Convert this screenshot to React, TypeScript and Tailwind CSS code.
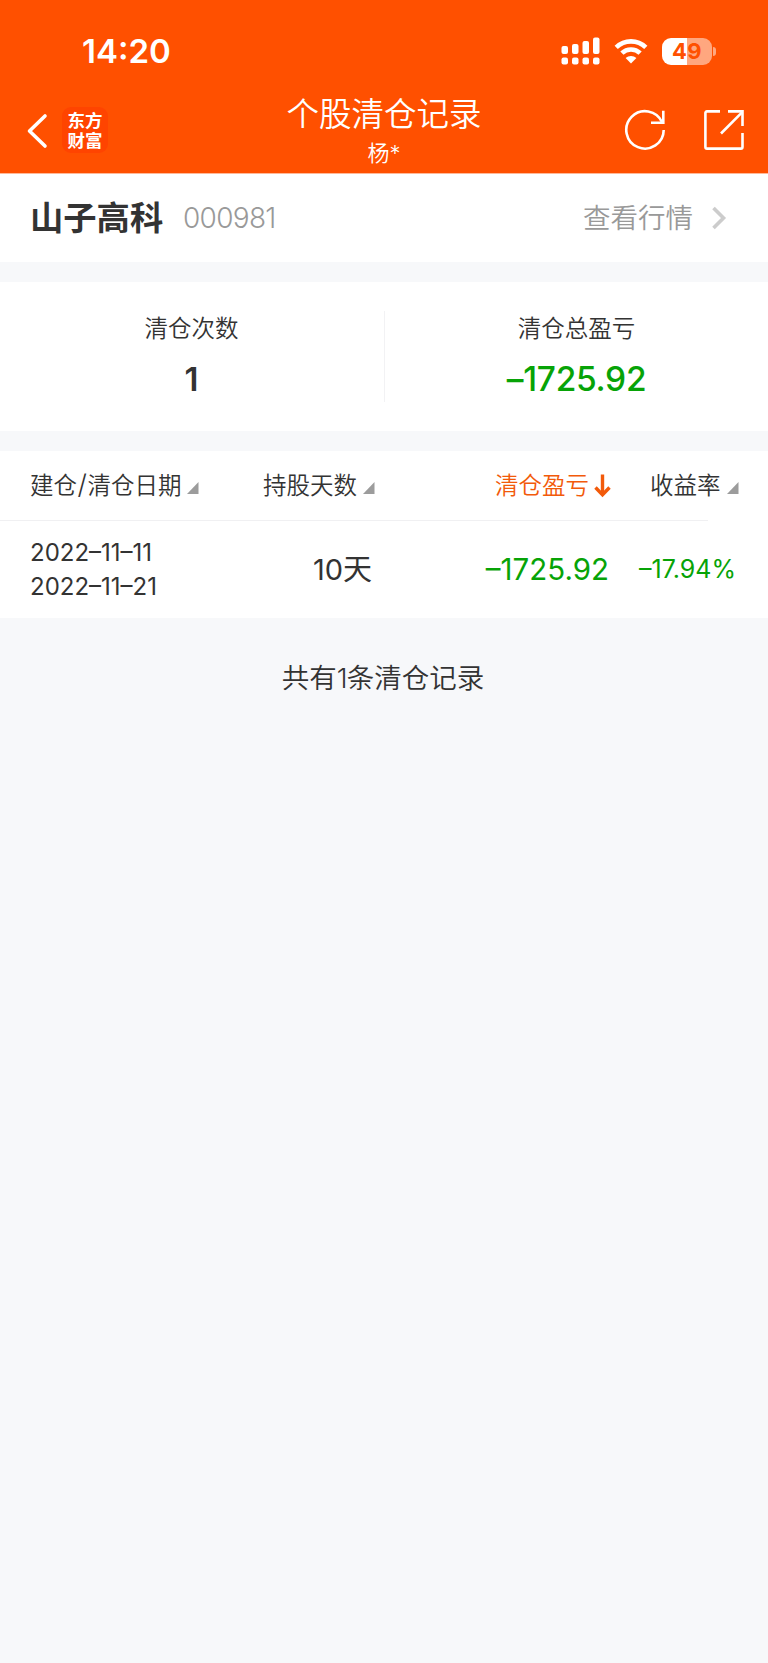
import React from "react";

interface SortHeaderProps {
  label: React.ReactNode;
  className?: string;
}

const SortHeader: React.FC<SortHeaderProps> = ({ label, className = "" }) => (
  <div className={`flex items-center shrink-0 ${className}`}>
    <span>{label}</span>
    <svg className="ml-[6px] mt-[4px] shrink-0" width="12" height="12" viewBox="0 0 12 12">
      <path d="M11.5 0V12H0Z" fill="#9c9c9c" />
    </svg>
  </div>
);

const StatusBar: React.FC = () => (
  <div className="flex h-[84px] items-start text-white">
    <span className="ml-[82px] mt-[31px] w-[92px] whitespace-nowrap text-[33px] leading-[40px] font-semibold">
      14:20
    </span>
    <svg className="ml-[387px] mt-[37px] shrink-0" width="39" height="28" viewBox="0 0 39 28" fill="currentColor">
      <rect x="0.5" y="9" width="6.5" height="8" rx="2" />
      <rect x="11" y="7" width="6.5" height="10" rx="2" />
      <rect x="21.5" y="4" width="6.5" height="13" rx="2" />
      <rect x="32" y="0.5" width="6.5" height="16.5" rx="2" />
      <rect x="0.5" y="20.5" width="6.5" height="7" rx="2" />
      <rect x="11" y="20.5" width="6.5" height="7" rx="2" />
      <rect x="21.5" y="20.5" width="6.5" height="7" rx="2" />
      <rect x="32" y="20.5" width="6.5" height="7" rx="2" />
    </svg>
    <svg className="ml-[14px] mt-[38px] shrink-0" width="34" height="26" viewBox="0 0 34 26" fill="none">
      <g stroke="currentColor" strokeWidth="4.6">
        <path d="M2.2 9.4C10.5 1.3 23.5 1.3 31.8 9.4" />
        <path d="M7.9 15.2C13 10.2 21 10.2 26.1 15.2" />
      </g>
      <path d="M17 25.4L11.6 20C14.6 17.3 19.4 17.3 22.4 20Z" fill="currentColor" />
    </svg>
    <div className="ml-[14px] mt-[38px] flex items-center">
      <div className="flex h-[27px] w-[50px] items-center justify-center rounded-[9px] bg-linear-to-r from-white from-50% to-[#ffa77f] to-50% text-[22px] leading-[27px] font-bold tracking-[0.5px]">
        <span className="text-[#ff5000]">49</span>
      </div>
      <div className="ml-[1px] h-[9px] w-[3px] rounded-r-full bg-[#ffa77f]" />
    </div>
  </div>
);

const NavBar: React.FC = () => (
  <div className="flex h-[89px] items-start text-white">
    <div className="flex w-[250px] shrink-0 items-start">
      <svg className="ml-[26px] mt-[29px]" width="22" height="36" viewBox="0 0 22 36" fill="none">
        <path d="M19 3L3.5 18L19 33" stroke="currentColor" strokeWidth="3.6" strokeLinecap="round" strokeLinejoin="round" />
      </svg>
      <div className="ml-[14px] mt-[23px] flex h-[46px] w-[46px] flex-col items-center justify-center rounded-[9px] bg-[#ff4400] pt-px text-[17.5px] leading-[19.5px] font-bold">
        <span>东方</span>
        <span>财富</span>
      </div>
    </div>
    <div className="flex w-[268px] flex-col items-center">
      <h1 className="mt-[11px] text-[32.5px] leading-[40px] font-[350]">个股清仓记录</h1>
      <span className="mt-[4px] text-[22px] leading-[28px] font-[350]">杨*</span>
    </div>
    <svg className="ml-[105px] mt-[24px] shrink-0" width="44" height="44" viewBox="0 0 44 44" fill="none" stroke="currentColor" strokeWidth="2.6">
      <path d="M40.7 22A18.7 18.7 0 1 1 39.1 14.3" />
      <path d="M40.3 2.7V14.7H28" />
    </svg>
    <svg className="ml-[35px] mt-[24px] shrink-0" width="44" height="44" viewBox="0 0 44 44" fill="none" stroke="currentColor" strokeWidth="2.6">
      <path d="M18 3.4H5Q3.4 3.4 3.4 5V39Q3.4 40.6 5 40.6H38.9Q40.5 40.6 40.5 39V25" />
      <path d="M26 3.4H40.5V18" />
      <path d="M40 4.3L19 25.5" />
    </svg>
  </div>
);

const App: React.FC = () => {
  return (
    <div className="min-h-[1663px] w-[768px] overflow-hidden bg-[#f7f8fa] font-['Inter','Noto_Sans_CJK_SC',sans-serif] text-[#333333]">
      <header className="h-[173px] bg-[#ff5000]">
        <StatusBar />
        <NavBar />
      </header>

      <section className="flex h-[89px] items-center border-t border-[#ffb999] bg-white pl-[30px]">
        <h2 className="w-[153px] whitespace-nowrap pt-px text-[33.3px] font-bold">山子高科</h2>
        <span className="w-[400px] text-[28px] font-[350] tracking-[-0.7px] text-[#999999]">000981</span>
        <span className="whitespace-nowrap pt-[2px] text-[27.5px] font-[350] text-[#999999]">查看行情</span>
        <svg className="ml-[18px]" width="18" height="26" viewBox="0 0 18 26" fill="none">
          <path d="M2.5 3L12.5 13L2.5 23" stroke="#cccccc" strokeWidth="3.6" />
        </svg>
      </section>

      <section className="mt-5 flex h-[149px] items-center bg-white">
        <div className="flex w-[383px] flex-col items-center pb-[3px]">
          <span className="text-[23.5px] leading-[36px] font-[350]">清仓次数</span>
          <span className="mt-[12px] text-[33px] leading-[40px] font-semibold">1</span>
        </div>
        <div className="ml-px h-[91px] w-px bg-[#f2f2f4]" />
        <div className="flex w-[383px] flex-col items-center pb-[3px]">
          <span className="text-[23.5px] leading-[36px] font-[350]">清仓总盈亏</span>
          <span className="mt-[12px] text-[33.5px] leading-[40px] font-[550] tracking-[-0.3px] text-[#07a307]">
            –1725.92
          </span>
        </div>
      </section>

      <section className="mt-5 h-[167px] bg-white">
        <div className="flex h-[69px] items-center pl-[30px] pt-px text-[23.5px] font-[350] whitespace-nowrap">
          <SortHeader
            label={<>建仓<span className="mx-[0.5px] text-[27px] leading-none">/</span>清仓日期</>}
            className="w-[233px]"
          />
          <SortHeader label="持股天数" className="w-[232px]" />
          <div className="flex w-[155px] items-center text-[#f25a0a]">
            <span>清仓盈亏</span>
            <svg className="ml-[5px]" width="17" height="24" viewBox="0 0 17 24" fill="none" stroke="currentColor" strokeWidth="3.4">
              <path d="M8.5 0.5V21" />
              <path d="M1.5 13.5L8.5 20.7L15.5 13.5" />
            </svg>
          </div>
          <SortHeader label="收益率" />
        </div>
        <div className="h-px w-[708px] bg-[#f0f0f2]" />
        <div className="flex h-[97px] items-center pl-[30px] font-normal whitespace-nowrap">
          <div className="flex w-[204px] flex-col text-[24px] leading-[34px]">
            <span>2022–11–11</span>
            <span>2022–11–21</span>
          </div>
          <span className="w-[138px] pt-px text-right text-[29px] font-[380]">10天</span>
          <span className="w-[237px] text-right text-[29.5px] text-[#07a307]">–1725.92</span>
          <span className="w-[127px] text-right text-[25px] text-[#07a307]">–17.94%</span>
        </div>
      </section>

      <p className="mt-[40px] pr-[2px] text-center text-[27.5px] leading-[40px] font-[350]">
        共有<span className="tracking-[-1px]">1</span>条清仓记录
      </p>
    </div>
  );
};

export default App;
